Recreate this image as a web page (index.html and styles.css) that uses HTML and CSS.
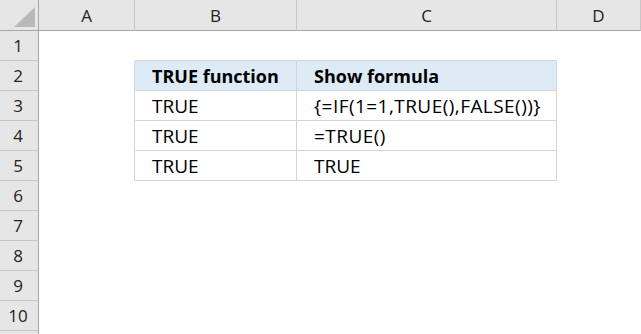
FILE: index.html
```html
<!DOCTYPE html>
<html>
<head>
<meta charset="utf-8">
<link rel="stylesheet" href="styles.css">
</head>
<body>
<div class="sheet">
  <div class="hd corner"><span class="tri"></span></div>
  <div class="hd col">A</div>
  <div class="hd col">B</div>
  <div class="hd col">C</div>
  <div class="hd col">D</div>

  <div class="hd row">1</div>
  <div class="c"></div><div class="c bt"></div><div class="c bt"></div><div class="c"></div>

  <div class="hd row">2</div>
  <div class="c bl"></div><div class="c t th">TRUE function</div><div class="c t th">Show formula</div><div class="c"></div>

  <div class="hd row">3</div>
  <div class="c bl"></div><div class="c t">TRUE</div><div class="c t formula">{=IF(1=1,TRUE(),FALSE())}</div><div class="c"></div>

  <div class="hd row">4</div>
  <div class="c bl"></div><div class="c t">TRUE</div><div class="c t formula">=TRUE()</div><div class="c"></div>

  <div class="hd row">5</div>
  <div class="c bl"></div><div class="c t">TRUE</div><div class="c t">TRUE</div><div class="c"></div>

  <div class="hd row">6</div><div class="c"></div><div class="c"></div><div class="c"></div><div class="c"></div>
  <div class="hd row">7</div><div class="c"></div><div class="c"></div><div class="c"></div><div class="c"></div>
  <div class="hd row">8</div><div class="c"></div><div class="c"></div><div class="c"></div><div class="c"></div>
  <div class="hd row">9</div><div class="c"></div><div class="c"></div><div class="c"></div><div class="c"></div>
  <div class="hd row">10</div><div class="c"></div><div class="c"></div><div class="c"></div><div class="c"></div>
  <div class="hd row"></div><div class="c"></div><div class="c"></div><div class="c"></div><div class="c"></div>
</div>
</body>
</html>
```

FILE: styles.css
```css
* { box-sizing: border-box; }

html, body {
  margin: 0;
  padding: 0;
  background: #ffffff;
  overflow: hidden;
}

.sheet {
  display: grid;
  grid-template-columns: 39px 96px 162px 260px 1fr;
  grid-template-rows: 31px;
  grid-auto-rows: 30px;
  width: 641px;
  font-family: "Open Sans", "Liberation Sans", sans-serif;
  font-size: 17px;
  color: #000000;
}

/* column and row headings */
.hd {
  background: #e6e6e6;
  color: #222222;
  display: flex;
  align-items: center;
  justify-content: center;
  border-right: 1px solid #c6c6c6;
  border-bottom: 1px solid #c6c6c6;
  font-size: 17px;
}

.col {
  border-bottom-color: #a6a6a6;
}

.row {
  border-right-color: #a6a6a6;
  padding-right: 2px;
}

.corner {
  position: relative;
  border-right-color: #a6a6a6;
  border-bottom-color: #a6a6a6;
}

.tri {
  position: absolute;
  right: 3px;
  bottom: 3px;
  width: 0;
  height: 0;
  border-left: 21px solid transparent;
  border-bottom: 20px solid #b9b9b9;
}

/* worksheet cells */
.c {
  display: flex;
  align-items: center;
  border-right: 1px solid transparent;
  border-bottom: 1px solid transparent;
  white-space: nowrap;
  font-size: 19px;
}

.bt { border-bottom-color: #d4d4d4; }
.bl { border-right-color: #d4d4d4; }

.t {
  border-right-color: #d4d4d4;
  border-bottom-color: #d4d4d4;
  padding-left: 17px;
}

.th {
  background: #ddebf7;
  font-weight: 700;
  font-size: 18px;
}

.formula {
  letter-spacing: 0.45px;
}
```
